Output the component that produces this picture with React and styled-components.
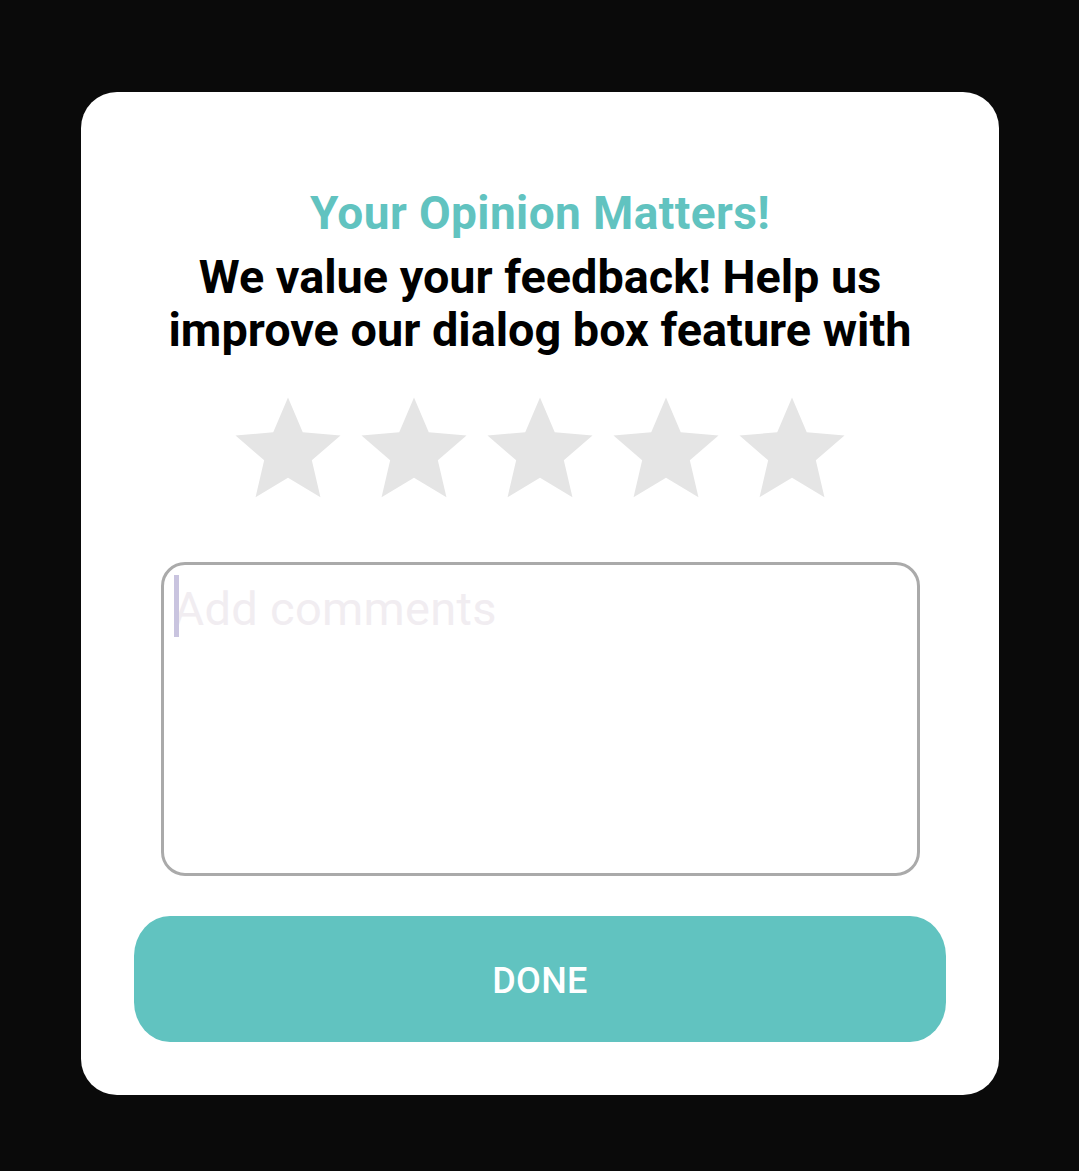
import React from 'react';
import styled, { createGlobalStyle } from 'styled-components';

const COLORS = {
  page: '#0a0a0a',
  teal: '#61c3c0',
  star: '#e5e5e5',
  border: '#aaaaaa',
  placeholder: '#f1edf1',
  caret: '#c9c4df',
};

const GlobalStyle = createGlobalStyle`
  html, body {
    margin: 0;
    padding: 0;
    background: ${COLORS.page};
  }
  body {
    font-family: Roboto, "Liberation Sans", sans-serif;
  }
`;

const Page = styled.div`
  min-height: 1171px;
  padding: 92px 80px 0 81px;
  box-sizing: border-box;
`;

const Card = styled.div`
  width: 918px;
  height: 1003px;
  box-sizing: border-box;
  background: #fff;
  border-radius: 36px;
  padding: 97px 53px 53px;
  display: flex;
  flex-direction: column;
  align-items: center;
`;

const Title = styled.h2`
  margin: 0;
  font-size: 46px;
  line-height: 48px;
  font-weight: 700;
  letter-spacing: 0.4px;
  color: ${COLORS.teal};
  text-align: center;
`;

const Message = styled.p`
  margin: 14px 0 0;
  width: 800px;
  font-size: 46.8px;
  line-height: 53px;
  font-weight: 700;
  color: #000;
  text-align: center;
`;

const Stars = styled.div`
  display: flex;
  margin-top: 30px;
`;

const StarButton = styled.button`
  border: 0;
  padding: 0;
  background: none;
  width: 126px;
  height: 126px;
  color: ${props => (props.active ? COLORS.teal : COLORS.star)};
  cursor: pointer;

  svg {
    display: block;
    width: 100%;
    height: 100%;
  }
`;

const Field = styled.div`
  position: relative;
  margin-top: 49px;
  width: 759px;
  height: 314px;

  &::before {
    content: '';
    position: absolute;
    left: 13px;
    top: 13px;
    width: 5px;
    height: 62px;
    background: ${COLORS.caret};
  }
`;

const Comments = styled.textarea`
  width: 100%;
  height: 100%;
  box-sizing: border-box;
  border: 3px solid ${COLORS.border};
  border-radius: 24px;
  padding: 17px 10px 14px;
  resize: none;
  outline: none;
  font-family: Roboto, "Liberation Sans", sans-serif;
  font-size: 47px;
  line-height: 54px;
  letter-spacing: 0.3px;
  color: #333;
  caret-color: transparent;

  &::placeholder {
    color: ${COLORS.placeholder};
  }
`;

const DoneButton = styled.button`
  margin-top: 40px;
  width: 100%;
  height: 126px;
  flex-shrink: 0;
  border: 0;
  border-radius: 36px / 40px;
  padding: 3px 0 0;
  background: ${COLORS.teal};
  color: #fff;
  font-family: Roboto, "Liberation Sans", sans-serif;
  font-size: 36px;
  font-weight: 500;
  letter-spacing: 0.3px;
  cursor: pointer;
`;

const Star = ({ active }) => (
  <StarButton active={active} aria-label="star">
    <svg viewBox="0 0 24 24">
      <path
        fill="currentColor"
        d="M12 17.27L18.18 21l-1.64-7.03L22 9.24l-7.19-.61L12 2 9.19 8.63 2 9.24l5.46 4.73L5.82 21z"
      />
    </svg>
  </StarButton>
);

const App = () => {
  return (
    <Page>
      <GlobalStyle />
      <Card>
        <Title>Your Opinion Matters!</Title>
        <Message>
          We value your feedback! Help us improve our dialog box feature with
        </Message>
        <Stars>
          {[1, 2, 3, 4, 5].map(n => (
            <Star key={n} active={false} />
          ))}
        </Stars>
        <Field>
          <Comments placeholder="Add comments" />
        </Field>
        <DoneButton>DONE</DoneButton>
      </Card>
    </Page>
  );
};

export default App;
